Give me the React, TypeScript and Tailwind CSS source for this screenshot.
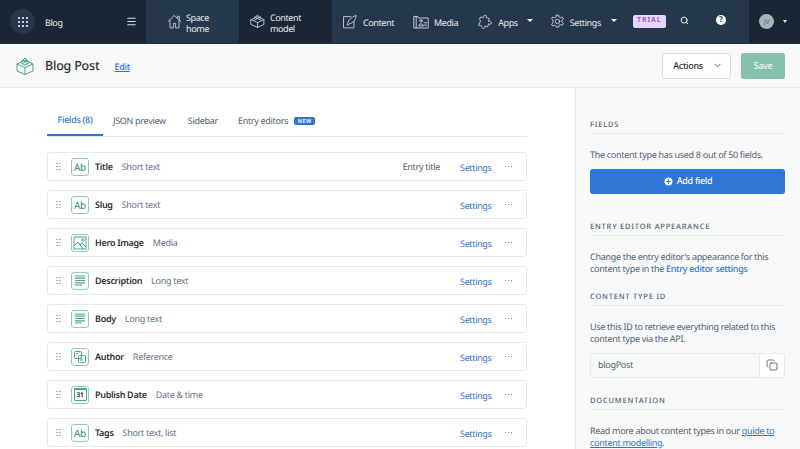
import { ChevronDown, CirclePlus, Copy, Menu, Search } from "lucide-react"
import type { ReactNode } from "react"

function Caret({ className }: { className: string }) {
  return <span className={`${className} mt-[-3px] h-0 w-0 border-x-[3px] border-t-[3px] border-x-transparent border-t-white`} />
}

function NavIcon({ children, size = 15 }: { children: ReactNode; size?: number }) {
  return (
    <svg width={size} height={size} viewBox="0 0 20 20" fill="none" stroke="#c3cfd5" strokeWidth="1.2" strokeLinejoin="round" strokeLinecap="round" className="shrink-0">
      {children}
    </svg>
  )
}

function Home() {
  return (
    <NavIcon size={15}>
      <path d="M1.5 10 9.500 2 18.500 10M4 8v10.500h4.500v-6h3v6H16V8M14 5.500V3h2.500v5" />
    </NavIcon>
  )
}

function Model() {
  return (
    <NavIcon size={15}>
      <path d="M1.500 7.500 10 3.500l8.500 4V14L10 18l-8.500-4ZM1.500 7.500 10 11.500l8.500-4M10 11.500V18" />
      <path d="M5.500 5.500 10 1.500l4.500 4M6 8l8-4M14 8 6 4" />
    </NavIcon>
  )
}

function ContentIcon() {
  return (
    <NavIcon>
      <path d="M16 10v8.500H2v-15h10" />
      <path d="M7 14c1-5 5-10 12-12-1 6-4 10-9 11l-3 2" />
    </NavIcon>
  )
}

function MediaIcon() {
  return (
    <NavIcon size={16}>
      <path d="M1 17V3h5l1 2h12v12ZM4 3v14" />
      <circle cx="10" cy="8.500" r="1.500" />
      <path d="M7 14.500c0-3 6-3 6 0ZM14 11h3M14 14h3" />
    </NavIcon>
  )
}

function Puzzle() {
  return (
    <NavIcon>
      <path d="M9 2c2-1 3 1 2 3l4 1-1 4c2-1 4 0 4 2s-3 2-4 1l-1 4-4-1c1 2 0 3-2 3s-3-2-2-3l-4-1 1-4c2 1 2-3 0-3l1-4 4 1C7 4 7 3 9 2Z" />
    </NavIcon>
  )
}

function Gear() {
  return (
    <NavIcon>
      <circle cx="10" cy="10" r="3" />
      <path d="M8.500 1.500h3l.5 2.500 2 1 2.400-1 1.500 2.500-2 1.700v2.600l2 1.700-1.500 2.500-2.400-1-2 1-.5 2.500h-3L8 16l-2-1-2.400 1-1.500-2.500 2-1.700V8.200l-2-1.700L3.600 4 6 5l2-1Z" />
    </NavIcon>
  )
}

function TopNav() {
  return (
    <nav className="flex h-[44px] shrink-0 items-stretch border-b border-[#1f2f3f] bg-[#25384b] text-[9px] tracking-[-0.4px] text-[#e5ebed]">
      <div className="flex w-[146px] items-center bg-[#1a2634] pl-[10px] pr-[9px]">
        <div className="grid size-[25px] grid-cols-[2px_2px_2px] content-center justify-center gap-[2px] rounded-full bg-[#25384b]">
          {Array.from({ length: 9 }).map((_, i) => (
            <span key={i} className="size-[2px] rounded-full bg-white" />
          ))}
        </div>
        <span className="ml-[10px] flex-1 pt-[2px]">Blog</span>
        <Menu size={11} strokeWidth={2.5} className="text-[#d9e0e4]" />
      </div>
      <div className="flex w-[93px] items-center gap-[4px] pl-[21px] leading-[11px]">
        <Home />
        <span className="w-[30px] pt-[2px]">Space home</span>
      </div>
      <div className="flex w-[93px] items-center gap-[5px] bg-[#1a2634] pl-[11px] leading-[11px]">
        <Model />
        <span className="w-[36px] pt-[2px]">Content model</span>
      </div>
      <div className="flex flex-1 items-center pl-[10px]">
        <ContentIcon />
        <span className="ml-[6px] pt-[2px]">Content</span>
        <span className="ml-[19px]"><MediaIcon /></span>
        <span className="ml-[5px] pt-[2px]">Media</span>
        <span className="ml-[20px]"><Puzzle /></span>
        <span className="ml-[5px] pt-[2px]">Apps</span>
        <Caret className="ml-[9px]" />
        <span className="ml-[17px]"><Gear /></span>
        <span className="ml-[5px] pt-[2px]">Settings</span>
        <Caret className="ml-[10px]" />
        <span className="ml-[16px] flex h-[13px] w-[33px] items-center justify-center rounded-[2px] bg-[#e8d5ff] text-[7px] font-semibold tracking-[1px] text-[#8a4fd1]">TRIAL</span>
        <Search size={9} strokeWidth={2.5} className="ml-[14px] mt-[-3px] text-white" />
        <span className="ml-[27px] mt-[-3px] flex size-[10px] items-center justify-center rounded-full bg-white text-[8px] font-bold leading-none text-[#25384b]">?</span>
      </div>
      <div className="flex w-[51px] items-center bg-[#1a2634] pl-[10px]">
        <span className="flex size-[15px] items-center justify-center rounded-full bg-[#a9b3bc] text-[6.5px] text-[#5d6b78]">JV</span>
        <span className="ml-[9px] h-0 w-0 border-x-[2.5px] border-t-[3px] border-x-transparent border-t-white" />
      </div>
    </nav>
  )
}

function PageHeader() {
  return (
    <header className="flex h-[44px] shrink-0 items-center border-b border-[#e5ebed] bg-[#f7f9fa] pl-[16px] pr-[15px]">
      <svg width="18" height="18" viewBox="0 0 18 18" fill="none" stroke="#47a888" strokeWidth="1" strokeLinejoin="round">
        <path d="M1 7 9 3.500 17 7v7l-8 3.500L1 14ZM1 7l8 3.500L17 7M9 10.500v7" />
        <path d="M4.500 5.500 9 1l4.500 4.500L9 8ZM7 3l4.500 4M11 3 6.500 7" />
      </svg>
      <h1 className="ml-[11px] pt-[2px] text-[12.5px] font-medium tracking-[-0.2px] text-[#2a3039]">Blog Post</h1>
      <a className="ml-[15px] pt-[2px] text-[9px] font-medium tracking-[-0.3px] text-[#2e75d4] underline">Edit</a>
      <button className="ml-auto flex h-[26px] w-[69px] items-center justify-center gap-[9px] rounded-[3px] border border-[#d3dce0] bg-white pl-[3px] text-[9px] font-medium tracking-[-0.3px] text-[#2a3039]">
        <span className="pt-[1px]">Actions</span>
        <ChevronDown size={11} strokeWidth={1.5} />
      </button>
      <button className="ml-[10px] h-[26px] w-[44px] rounded-[3px] bg-[#85c0ad] pt-[1px] text-[9px] font-medium tracking-[-0.3px] text-white/90">Save</button>
    </header>
  )
}

function Tabs() {
  return (
    <div className="flex h-[36px] items-stretch border-b border-[#e5ebed] text-[9px] tracking-[-0.3px] text-[#536171]">
      <span className="flex w-[56px] items-center justify-center border-b-2 border-[#2e75d4] pt-[5px] font-medium text-[#2e75d4]">Fields (8)</span>
      <span className="ml-[10px] flex items-center pt-[5px]">JSON preview</span>
      <span className="ml-[22px] flex items-center pt-[5px]">Sidebar</span>
      <span className="ml-[20px] flex items-center pt-[5px]">Entry editors</span>
      <span className="ml-[6px] mt-[16px] h-[8px] rounded-[2px] bg-[#2e75d4] px-[3.5px] text-[5.5px] font-semibold leading-[8px] tracking-[.5px] text-white">NEW</span>
    </div>
  )
}

type Kind = "text" | "image" | "long" | "ref" | "date"

function FieldIcon({ kind }: { kind: Kind }) {
  return (
    <span className="flex size-[18px] shrink-0 items-center justify-center rounded-[3px] border border-[#8fcdb7] text-[#2a8a6b]">
      {kind === "text" && <span className="text-[10px] leading-none">Ab</span>}
      {kind === "long" && (
        <svg width="12" height="11" viewBox="0 0 12 11" stroke="#47a888" strokeWidth="1.2">
          <path d="M1 1h10M1 3.200h10M1 5.500h10M1 7.800h10M1 10h7" />
        </svg>
      )}
      {kind === "image" && (
        <svg width="14" height="14" viewBox="0 0 14 14" fill="none" stroke="#47a888" strokeWidth="1">
          <rect x="1" y="1" width="12" height="12" />
          <circle cx="10" cy="4" r="1.200" />
          <path d="m1 10 4-4 5 7M7 9l2-2 4 4" />
        </svg>
      )}
      {kind === "ref" && (
        <svg width="14" height="14" viewBox="0 0 14 14" fill="none" stroke="#47a888" strokeWidth="1">
          <rect x="1.500" y="1.500" width="7" height="7" rx="1" />
          <rect x="5.500" y="5.500" width="7" height="7" rx="1" />
          <path d="M3 3.500h2M7 8h2M7 10h3" />
        </svg>
      )}
      {kind === "date" && (
        <span className="flex h-[13px] w-[13px] flex-col rounded-[1px] border border-[#47a888]">
          <span className="h-[2px] border-b border-[#47a888]" />
          <span className="text-center text-[6.5px] font-bold leading-[10px] text-[#2a3039]">31</span>
        </span>
      )}
    </span>
  )
}

const fields: { name: string; type: string; kind: Kind; note?: string }[] = [
  { name: "Title", type: "Short text", kind: "text", note: "Entry title" },
  { name: "Slug", type: "Short text", kind: "text" },
  { name: "Hero Image", type: "Media", kind: "image" },
  { name: "Description", type: "Long text", kind: "long" },
  { name: "Body", type: "Long text", kind: "long" },
  { name: "Author", type: "Reference", kind: "ref" },
  { name: "Publish Date", type: "Date & time", kind: "date" },
  { name: "Tags", type: "Short text, list", kind: "text" },
]

function FieldRow({ name, type, kind, note }: (typeof fields)[number]) {
  return (
    <div className="flex h-[29px] shrink-0 items-center rounded-[3px] border border-[#e5ebed] bg-white pl-[8px] pr-[14px] text-[9px] tracking-[-0.3px]">
      <span className="mr-[10.5px] grid grid-cols-[1.5px_1.5px] gap-[1.5px]">
        {Array.from({ length: 6 }).map((_, i) => (
          <span key={i} className="size-[1.5px] bg-[#a9b9c0]" />
        ))}
      </span>
      <FieldIcon kind={kind} />
      <span className="ml-[6px] pt-[1px] font-semibold text-[#2a3039]">{name}</span>
      <span className="ml-[9px] pt-[1px] text-[#67728a]">{type}</span>
      {note && <span className="ml-auto pt-[1px] text-[#536171]">{note}</span>}
      <a className={`${note ? "ml-[20px]" : "ml-auto"} pt-[2px] tracking-[-0.35px] text-[#2e75d4]`}>Settings</a>
      <span className="ml-[13px] flex gap-[1.5px]">
        <span className="size-[1.5px] rounded-full bg-[#2e75d4]" />
        <span className="size-[1.5px] rounded-full bg-[#2e75d4]" />
        <span className="size-[1.5px] rounded-full bg-[#2e75d4]" />
      </span>
    </div>
  )
}

function SideTitle({ children }: { children: ReactNode }) {
  return (
    <h2 className="border-b border-[#e5ebed] pb-[2px] text-[7.5px] font-medium leading-[12px] tracking-[.8px] text-[#536171]">{children}</h2>
  )
}

function Sidebar() {
  return (
    <aside className="flex w-[225px] shrink-0 flex-col border-l border-[#e5ebed] bg-[#f7f9fa] pl-[14px] pr-[15px] pt-[31px] text-[9px] leading-[12.5px] tracking-[-0.3px] text-[#536171]">
      <SideTitle>FIELDS</SideTitle>
      <p className="mt-[15px]">The content type has used 8 out of 50 fields.</p>
      <button className="mt-[7px] flex h-[25px] shrink-0 items-center justify-center gap-[3px] rounded-[3px] bg-[#2e75d4] text-[9px] font-medium text-white">
        <CirclePlus size={11} fill="white" stroke="#2e75d4" strokeWidth={2.5} />
        Add field
      </button>
      <div className="mt-[27px]"><SideTitle>ENTRY EDITOR APPEARANCE</SideTitle></div>
      <p className="mt-[15px]">
        Change the entry editor's appearance for this content type in the <a className="font-medium text-[#2e75d4]">Entry editor settings</a>
      </p>
      <div className="mt-[15px]"><SideTitle>CONTENT TYPE ID</SideTitle></div>
      <p className="mt-[15px]">Use this ID to retrieve everything related to this content type via the API.</p>
      <div className="mt-[7px] flex h-[25px] shrink-0 items-center rounded-[3px] border border-[#e5ebed]">
        <span className="flex-1 pl-[7px]">blogPost</span>
        <span className="flex h-full w-[25px] items-center justify-center rounded-r-[3px] border-l border-[#e5ebed] bg-white">
          <Copy size={12} className="text-[#67728a]" />
        </span>
      </div>
      <div className="mt-[17px]"><SideTitle>DOCUMENTATION</SideTitle></div>
      <p className="mt-[15px]">
        Read more about content types in our <a className="text-[#2e75d4] underline">guide to content modelling</a>.
      </p>
    </aside>
  )
}

export default function App() {
  return (
    <div className="flex h-[449px] w-[800px] flex-col overflow-hidden bg-white font-['Noto_Sans',sans-serif] [text-rendering:geometricPrecision]">
      <TopNav />
      <PageHeader />
      <div className="flex min-h-0 flex-1">
        <main className="min-w-0 flex-1 pl-[47px] pr-[48px] pt-[13px]">
          <Tabs />
          <div className="mt-[15px] flex flex-col gap-[9px]">
            {fields.map((f) => (
              <FieldRow key={f.name} {...f} />
            ))}
          </div>
        </main>
        <Sidebar />
      </div>
    </div>
  )
}
